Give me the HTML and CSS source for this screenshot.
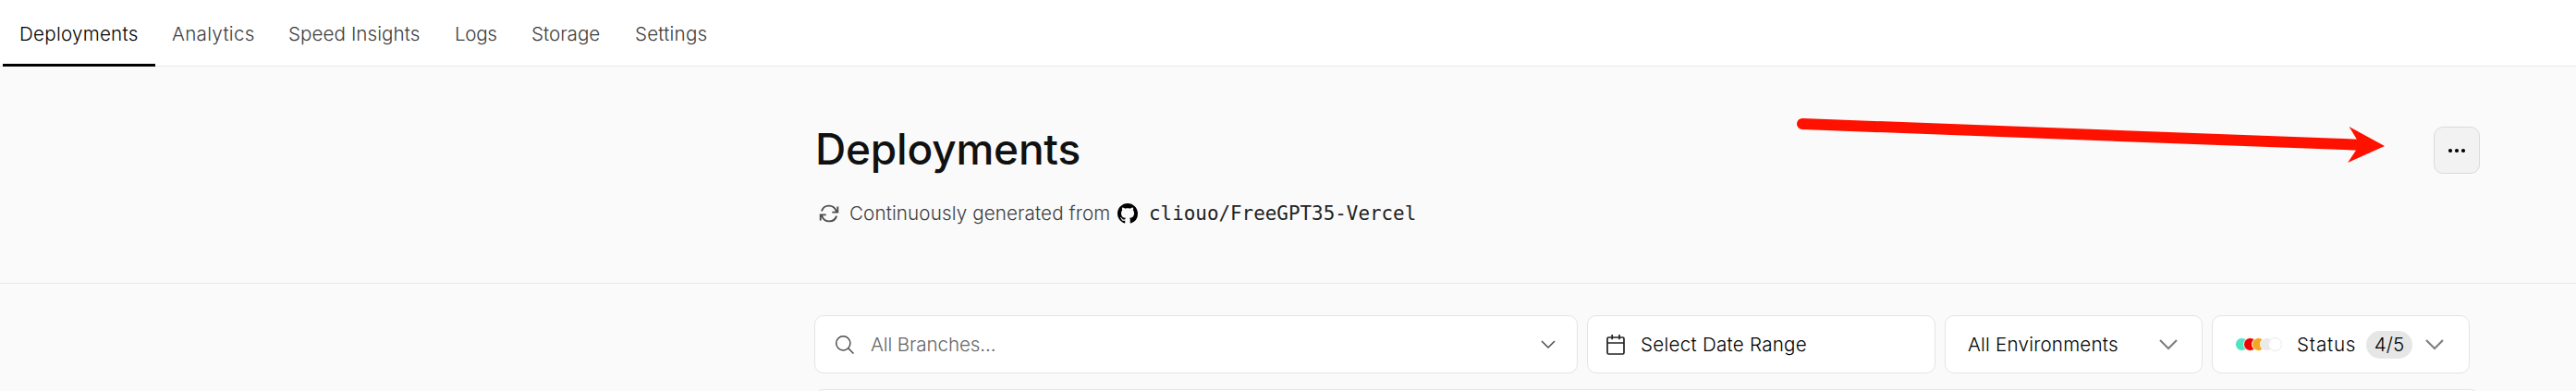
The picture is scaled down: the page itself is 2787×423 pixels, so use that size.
FILE: index.html
```html
<!DOCTYPE html>
<html lang="en">
<head>
<meta charset="utf-8">
<title>Deployments</title>
<link rel="stylesheet" href="styles.css">
</head>
<body>
<nav class="tabs">
  <a class="tab tab-active">Deployments</a>
  <a class="tab tab-analytics">Analytics</a>
  <a class="tab tab-insights">Speed Insights</a>
  <a class="tab tab-logs">Logs</a>
  <a class="tab tab-storage">Storage</a>
  <a class="tab tab-settings">Settings</a>
</nav>
<header class="header">
  <div class="title-row">
    <h1 class="title">Deployments</h1>
    <button class="more"><svg width="20" height="6" viewBox="0 0 20 6"><circle cx="3" cy="3" r="2.1"/><circle cx="10" cy="3" r="2.1"/><circle cx="17" cy="3" r="2.1"/></svg></button>
  </div>
  <div class="source">
    <svg class="sync" width="22" height="20" viewBox="0 0 22 20" fill="none" stroke="#4d4d4d" stroke-width="1.9"><path d="M2.9 7.4A8.3 8.3 0 0 1 18.6 7L20 8.7M20.3 2.5v6.1h-6M19.1 12.6A8.3 8.3 0 0 1 3.4 13L2 11.3M1.7 17.5v-6.1h6"/></svg>
    <span class="source-text">Continuously generated from</span>
    <svg class="github" width="22" height="22" viewBox="0 0 16 16"><path d="M8 0C3.58 0 0 3.58 0 8c0 3.54 2.29 6.53 5.47 7.59.4.07.55-.17.55-.38 0-.19-.01-.82-.01-1.49-2.01.37-2.53-.49-2.69-.94-.09-.23-.48-.94-.82-1.13-.28-.15-.68-.52-.01-.53.63-.01 1.08.58 1.23.82.72 1.21 1.87.87 2.33.66.07-.52.28-.87.51-1.07-1.78-.2-3.64-.89-3.64-3.95 0-.87.31-1.59.82-2.15-.08-.2-.36-1.02.08-2.12 0 0 .67-.21 2.2.82.64-.18 1.32-.27 2-.27s1.36.09 2 .27c1.53-1.04 2.2-.82 2.2-.82.44 1.1.16 1.92.08 2.12.51.56.82 1.27.82 2.15 0 3.07-1.87 3.75-3.65 3.95.29.25.54.73.54 1.48 0 1.07-.01 1.93-.01 2.2 0 .21.15.46.55.38A8.01 8.01 0 0 0 16 8c0-4.42-3.58-8-8-8z"/></svg>
    <span class="repo">cliouo/FreeGPT35-Vercel</span>
  </div>
  <svg class="arrow" width="640" height="54" viewBox="1944 126 640 54"><path d="M1950 134L2552 156.700" stroke="#ff1100" stroke-width="12" stroke-linecap="round"/><path d="M2541.500 137L2580 158L2540 176L2549 162.500L2550 151Z" fill="#ff1100"/></svg>
</header>
<main class="content">
  <div class="filters">
    <div class="field branches">
      <svg width="22" height="22" viewBox="0 0 22 22" fill="none" stroke="#4d4d4d" stroke-width="1.5"><circle cx="9.300" cy="9.300" r="7.600"/><path d="M14.500 14.500l6 6"/></svg>
      <span class="placeholder">All Branches...</span>
      <svg class="end" width="16" height="10" viewBox="0 0 16 10" fill="none" stroke="#4d4d4d" stroke-width="1.500"><path d="M1 1l7 7 7-7"/></svg>
    </div>
    <div class="field date">
      <svg width="20" height="22" viewBox="0 0 20 22" fill="none" stroke="#222" stroke-width="1.700"><path d="M2.500 3h15a1.500 1.500 0 0 1 1.500 1.500v15a1.500 1.500 0 0 1-1.500 1.500h-15a1.500 1.500 0 0 1-1.500-1.500V4.500a1.500 1.500 0 0 1 1.500-1.500M1 9h18M6.200 0v5.200M14 0v5.200"/></svg>
      <span class="date-text">Select Date Range</span>
    </div>
    <div class="field env">
      <span class="env-text">All Environments</span>
      <svg class="end" width="20" height="12" viewBox="0 0 20 12" fill="none" stroke="#808080" stroke-width="2.200"><path d="M1 1l9 9 9-9"/></svg>
    </div>
    <div class="field status">
      <span class="dots"><i class="dot ready"></i><i class="dot error"></i><i class="dot building"></i><i class="dot queued"></i><i class="dot off"></i></span>
      <span class="status-text">Status</span>
      <span class="count">4/5</span>
      <svg class="end" width="20" height="12" viewBox="0 0 20 12" fill="none" stroke="#808080" stroke-width="2.200"><path d="M1 1l9 9 9-9"/></svg>
    </div>
  </div>
  <div class="list"></div>
</main>
</body>
</html>
```
FILE: styles.css
```css
* { box-sizing: border-box; }
body { margin: 0; background: #fafafa; color: #000; font: 350 20.6px/30px Inter, sans-serif; }
svg { display: block; flex: none; }
.tabs { display: flex; height: 72px; padding-left: 3px; background: #fff; border-bottom: 1px solid #e8e8e8; }
.tab { height: 72px; padding: 22px 0 0 18px; color: #3d3d3d; white-space: nowrap; }
.tab-active { width: 165px; color: #000; border-bottom: 3px solid #000; letter-spacing: .25px; }
.tab-analytics { width: 126px; letter-spacing: .3px; }
.tab-insights { width: 180px; letter-spacing: .07px; }
.tab-logs { width: 83px; letter-spacing: -.3px; }
.tab-storage { width: 112px; }
.tab-settings { width: 114px; letter-spacing: .2px; }
.header { position: relative; height: 235px; padding: 64px 104px 0 881px; border-bottom: 1px solid #e6e6e6; }
.title-row { display: flex; justify-content: space-between; height: 51px; }
.title { margin: 0; padding-left: 1px; color: #111; font-size: 46px; line-height: 51px; font-weight: 500; letter-spacing: -.2px; }
.more { display: flex; align-items: center; justify-content: center; width: 50px; height: 51px; margin-top: 1px; padding: 0; background: #f2f2f2; border: 1px solid #dbdbdb; border-radius: 10px; }
.source { display: flex; align-items: center; height: 30px; margin-top: 29px; padding-left: 5px; color: #3d3d3d; white-space: nowrap; }
.source-text { width: 290px; margin-left: 11px; letter-spacing: .12px; }
.repo { margin-left: 12px; color: #222; font: 400 20.9px/30px "DejaVu Sans Mono", monospace; }
.arrow { position: absolute; left: 1944px; top: 54px; }
.content { height: 116px; overflow: hidden; padding: 34px 0 0 881px; }
.filters { display: flex; gap: 10px; height: 63px; }
.field { display: flex; align-items: center; height: 63px; background: #fff; border: 1px solid #e4e4e4; border-radius: 10px; white-space: nowrap; }
.end { margin-left: auto; }
.branches { width: 826px; padding: 0 23px 0 21px; }
.placeholder { margin-left: 17px; color: #666; letter-spacing: -.12px; }
.date { width: 377px; padding-left: 20px; }
.date-text { margin-left: 17px; letter-spacing: .25px; }
.env { width: 279px; padding: 0 26px 0 24px; }
.env-text { letter-spacing: .2px; }
.status { width: 279px; padding: 0 27px 0 24px; }
.dots { display: flex; width: 67px; }
.dot { width: 15px; height: 15px; margin-right: -6px; border: 1px solid #fff; border-radius: 50%; }
.ready { background: #50e3c2; }
.error { background: #e00; }
.building { background: #f5a623; }
.queued { background: #eaeaea; }
.off { background: #fff; border-color: #eaeaea; }
.status-text { width: 64px; letter-spacing: .8px; }
.count { width: 50px; height: 30px; margin-left: 11px; background: #e6e6e6; border-radius: 15px; text-align: center; }
.list { width: 1801px; height: 18px; margin-top: 17px; background: #fff; border: 1px solid #e4e4e4; border-bottom: 0; border-radius: 10px 10px 0 0; }
```
